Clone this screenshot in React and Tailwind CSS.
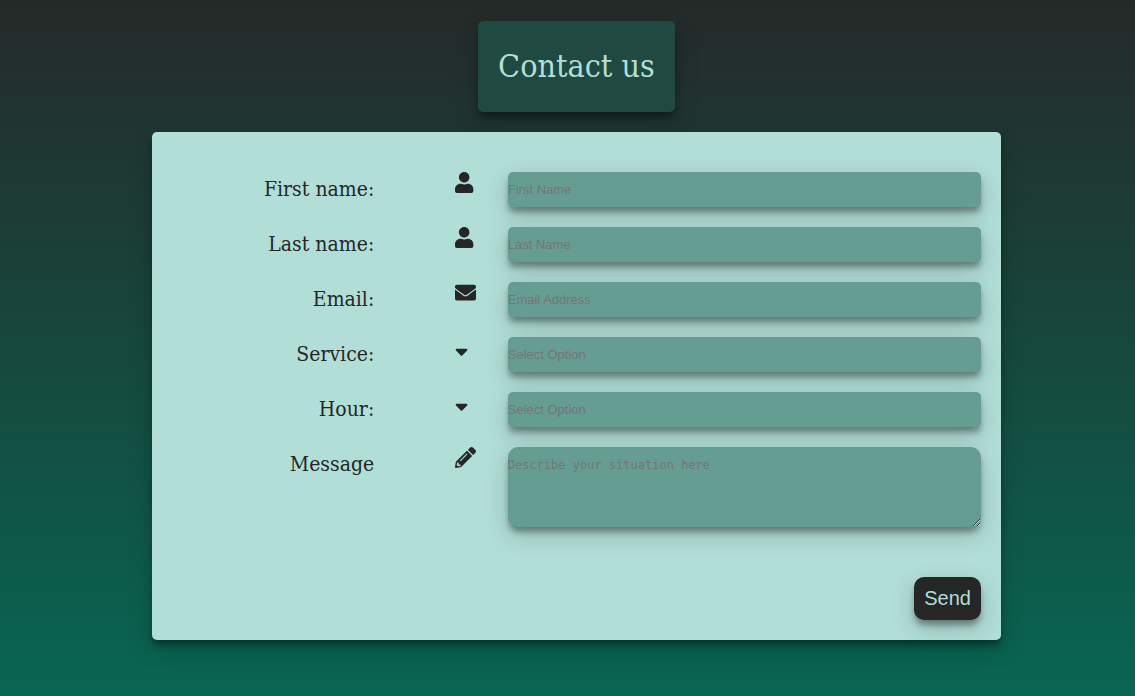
import React from "react";
import { FaUser, FaEnvelope, FaSortDown, FaPencilAlt } from "react-icons/fa";

const shadow =
  "shadow-[0_6px_6px_-1px_rgba(0,0,0,0.36),0_8px_24px_0_rgba(0,0,0,0.18)]";
const field = `block w-full bg-[#659d93] text-[#212529] placeholder:text-[#757575] outline-none ${shadow}`;
const sans = "font-['Liberation_Sans',sans-serif] text-[13px]";

const rows = [
  { id: "first", label: "First name:", Icon: FaUser, placeholder: "First Name", type: "text" },
  { id: "last", label: "Last name:", Icon: FaUser, placeholder: "Last Name", type: "text" },
  { id: "email", label: "Email:", Icon: FaEnvelope, placeholder: "Email Address", type: "email" },
  { id: "service", label: "Service:", Icon: FaSortDown, options: ["Consultation", "Support"] },
  { id: "hour", label: "Hour:", Icon: FaSortDown, options: ["09:00", "12:00", "15:00"] },
  { id: "message", label: "Message", Icon: FaPencilAlt, placeholder: "Describe your situation here", type: "area" },
];

function Control({ row }) {
  if (row.options) {
    return (
      <select id={row.id} defaultValue="" className={`${field} ${sans} h-[35px] appearance-none rounded-[5px] !text-[#757575]`}>
        <option value="" disabled>Select Option</option>
        {row.options.map((o) => (
          <option key={o}>{o}</option>
        ))}
      </select>
    );
  }
  if (row.type === "area") {
    return (
      <textarea
        id={row.id}
        placeholder={row.placeholder}
        className={`${field} h-20 resize rounded-[10px] pt-[11px] font-['DejaVu_Sans_Mono',monospace] text-[12px] leading-[14px]`}
      />
    );
  }
  return (
    <input id={row.id} type={row.type} placeholder={row.placeholder} className={`${field} ${sans} h-[35px] rounded-[5px]`} />
  );
}

export default function App() {
  return (
    <main className="flex min-h-screen flex-col items-center gap-5 bg-[linear-gradient(to_bottom,#252a29,#086652)] pt-[21px] pb-14 pl-[18px] font-['DejaVu_Serif_Condensed','DejaVu_Serif',serif] text-[#262626]">
      <h1 className={`rounded-[5px] bg-[#1f4941] px-5 py-6 text-[32px] leading-[43px] text-[#b1ded7] ${shadow}`}>
        Contact us
      </h1>
      <form
        onSubmit={(e) => e.preventDefault()}
        className={`flex w-[76%] flex-col rounded-[5px] bg-[#b1ded7] px-5 pt-10 pb-5 ${shadow}`}
      >
        <div className="flex flex-col gap-5">
          {rows.map((row) => (
            <div key={row.id} className="grid grid-cols-[25%_10%_1fr_58.5%] items-start">
              <label htmlFor={row.id} className="text-right text-[21px] leading-[35px] whitespace-nowrap">
                {row.label}
              </label>
              <row.Icon aria-hidden="true" preserveAspectRatio="xMinYMid meet" className="col-start-3 size-[21px]" />
              <Control row={row} />
            </div>
          ))}
        </div>
        <button
          type="submit"
          className={`mt-[50px] self-end rounded-[10px] bg-[#262626] p-[10px] font-['Liberation_Sans',sans-serif] text-[20px] leading-[23px] text-[#b1ded7] ${shadow}`}
        >
          Send
        </button>
      </form>
    </main>
  );
}
